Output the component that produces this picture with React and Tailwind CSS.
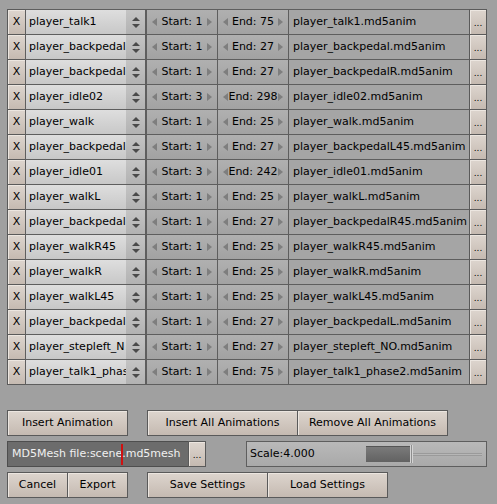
import React from "react";

const rows = [
  ["player_talk1", 1, 75, "player_talk1.md5anim"],
  ["player_backpedal", 1, 27, "player_backpedal.md5anim"],
  ["player_backpedal", 1, 27, "player_backpedalR.md5anim"],
  ["player_idle02", 3, 298, "player_idle02.md5anim"],
  ["player_walk", 1, 25, "player_walk.md5anim"],
  ["player_backpedal", 1, 27, "player_backpedalL45.md5anim"],
  ["player_idle01", 3, 242, "player_idle01.md5anim"],
  ["player_walkL", 1, 25, "player_walkL.md5anim"],
  ["player_backpedal", 1, 27, "player_backpedalR45.md5anim"],
  ["player_walkR45", 1, 25, "player_walkR45.md5anim"],
  ["player_walkR", 1, 25, "player_walkR.md5anim"],
  ["player_walkL45", 1, 25, "player_walkL45.md5anim"],
  ["player_backpedal", 1, 27, "player_backpedalL.md5anim"],
  ["player_stepleft_N", 1, 27, "player_stepleft_NO.md5anim"],
  ["player_talk1_phas", 1, 75, "player_talk1_phase2.md5anim"],
];

const font = { fontFamily: "'DejaVu Sans', Verdana, sans-serif" };

const beige =
  "border border-[#5a5a5a] bg-gradient-to-b from-[#ddd5ce] to-[#c5bab1] shadow-[inset_1px_1px_0_#ece6e0]";

function Tri({ dir }) {
  return (
    <svg width="5" height="8" viewBox="0 0 5 8" className="shrink-0">
      {dir === "l" ? (
        <polygon points="5,0 0,4 5,8" fill="#7e7e7e" />
      ) : (
        <polygon points="0,0 5,4 0,8" fill="#7e7e7e" />
      )}
    </svg>
  );
}

function NumField({ w, label, value }) {
  return (
    <div
      className={`${w} -ml-px h-[26px] flex items-center justify-between px-[5px] border border-[#5e5e5e] bg-gradient-to-b from-[#b0b0b0] to-[#a2a2a2]`}
    >
      <Tri dir="l" />
      <span className="text-[11px] text-black whitespace-nowrap">
        {label} {value}
      </span>
      <Tri dir="r" />
    </div>
  );
}

function Row({ r }) {
  const [name, start, end, file] = r;
  return (
    <div className="flex -mt-px">
      <div
        className={`w-[19px] h-[26px] flex items-center justify-center text-[11px] text-black ${beige}`}
      >
        X
      </div>
      <div className="w-[121px] -ml-px h-[26px] flex border border-[#5e5e5e] overflow-hidden">
        <div className="flex-1 flex items-center pl-[3px] bg-gradient-to-b from-[#dedede] to-[#c8c8c8] overflow-hidden whitespace-nowrap text-[11px] text-black">
          {name}
        </div>
        <div className="w-[19px] flex items-center justify-center bg-gradient-to-b from-[#c4c4c4] to-[#b2b2b2]">
          <svg width="8" height="11" viewBox="0 0 8 11">
            <polygon points="0,4 4,0 8,4" fill="#4a4a4a" />
            <polygon points="0,7 8,7 4,11" fill="#4a4a4a" />
          </svg>
        </div>
      </div>
      <div className="w-px" />
      <NumField w="w-[72px]" label="Start:" value={start} />
      <NumField w="w-[72px]" label="End:" value={end} />
      <div className="w-[182px] -ml-px h-[26px] flex items-center pl-[4px] border border-[#5e5e5e] bg-[#a5a5a5] text-[11px] text-black whitespace-nowrap overflow-hidden">
        {file}
      </div>
      <div
        className={`w-[18px] -ml-px h-[26px] flex items-end justify-center pb-[6px] text-[9px] leading-none text-black ${beige}`}
      >
        ...
      </div>
    </div>
  );
}

function Btn({ w, children, cls = "" }) {
  return (
    <div
      className={`${w} h-[26px] flex items-center justify-center text-[11px] text-black whitespace-nowrap ${beige} ${cls}`}
    >
      {children}
    </div>
  );
}

export default function App() {
  return (
    <div
      className="w-[497px] h-[504px] bg-[#a0a0a0] pl-[7px] pt-[10px] overflow-hidden"
      style={font}
    >
      <div className="flex flex-col">
        {rows.map((r, i) => (
          <Row key={i} r={r} />
        ))}
      </div>

      <div className="mt-[25px] flex">
        <Btn w="w-[121px]">Insert Animation</Btn>
        <div className="w-[19px]" />
        <Btn w="w-[151px]">Insert All Animations</Btn>
        <Btn w="w-[151px]" cls="-ml-px">
          Remove All Animations
        </Btn>
      </div>

      <div className="mt-[5px] flex">
        <div className="w-[182px] h-[26px] flex items-center pl-[4px] border border-[#4e4e4e] bg-[#6c6c6c] text-[11px] text-[#f0f0f0] whitespace-nowrap">
          <span>MD5Mesh file:scene</span>
          <span className="w-[2px] h-[21px] bg-[#d01010] -mx-px" />
          <span>.md5mesh</span>
        </div>
        <div
          className={`w-[18px] -ml-px h-[26px] flex items-end justify-center pb-[6px] text-[9px] leading-none text-black ${beige}`}
        >
          ...
        </div>
        <div className="w-[40px]" />
        <div className="w-[241px] h-[26px] flex items-center border border-[#5e5e5e] bg-gradient-to-b from-[#b9b9b9] to-[#a9a9a9]">
          <span className="w-[119px] pl-[3px] text-[11px] text-black">
            Scale:4.000
          </span>
          <div className="h-[16px] w-[44px] bg-gradient-to-b from-[#7a7a7a] to-[#626262] border-t border-[#555]" />
          <div className="h-[18px] w-[3px] bg-[#8e8e8e] border-x border-[#d4d4d4]" />
          <div className="w-[69px] h-[3px] bg-[#b6b6b6] border-y border-[#9a9a9a]" />
        </div>
      </div>

      <div className="mt-[5px] flex">
        <Btn w="w-[61px]">Cancel</Btn>
        <Btn w="w-[61px]" cls="-ml-px">
          Export
        </Btn>
        <div className="w-[19px]" />
        <Btn w="w-[121px]">Save Settings</Btn>
        <Btn w="w-[121px]" cls="-ml-px">
          Load Settings
        </Btn>
      </div>
    </div>
  );
}
